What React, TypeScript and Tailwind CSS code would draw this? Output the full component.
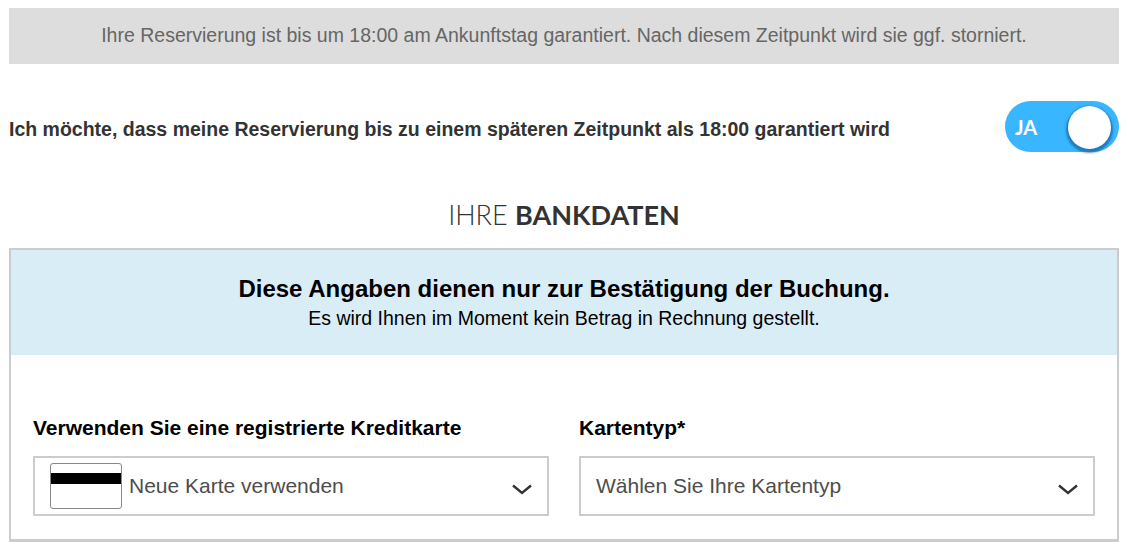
const Chevron = () => (
  <svg width="20" height="11" viewBox="0 0 20 11" fill="none" className="mt-[6px] shrink-0">
    <path d="M1 1.5 L10 9 L19 1.5" stroke="#333" strokeWidth="2.4" />
  </svg>
);

const CardIcon = () => (
  <div className="relative h-[46px] w-[72px] shrink-0 rounded-[3px] border border-[#888] bg-white">
    <div className="absolute inset-x-0 top-[9px] h-[11px] bg-black" />
  </div>
);

const App = () => (
  <div className="w-[1128px] h-[551px] overflow-hidden bg-white pt-2 px-[9px] font-['Liberation_Sans',sans-serif]">
    <div className="flex h-14 items-center justify-center bg-[#dddddd] pb-[1px] text-[19.5px] text-[#666666]">
      Ihre Reservierung ist bis um 18:00 am Ankunftstag garantiert. Nach diesem Zeitpunkt wird sie ggf. storniert.
    </div>

    <div className="mt-[37px] flex h-[51px] items-center justify-between">
      <span className="pt-[6px] text-[19.5px] font-bold text-[#333333]">
        Ich möchte, dass meine Reservierung bis zu einem späteren Zeitpunkt als 18:00 garantiert wird
      </span>
      <div className="relative flex h-[51px] w-[114px] items-center rounded-full bg-[#38b6ff] pl-[10px]">
        <span className="font-['Lato',sans-serif] text-[20px] font-bold text-white">JA</span>
        <div className="absolute right-[8px] top-[5px] h-[43px] w-[43px] rounded-full bg-white shadow-[0_2px_2px_2px_rgba(20,90,150,0.65)]" />
      </div>
    </div>

    <h2 className="mt-[47px] text-center font-['Lato',sans-serif] text-[27px] leading-[32px] text-[#333333]">
      <span className="font-light">IHRE </span>
      <span className="font-bold">BANKDATEN</span>
    </h2>

    <div className="mt-[17px] h-[294px] border-2 border-b-[3px] border-[#cccccc]">
      <div className="flex h-[105px] flex-col items-center bg-[#d9edf7] pt-[25px] text-black">
        <p className="text-[24px] font-bold leading-[28px]">Diese Angaben dienen nur zur Bestätigung der Buchung.</p>
        <p className="mt-[2px] text-[19.5px] leading-[27px]">Es wird Ihnen im Moment kein Betrag in Rechnung gestellt.</p>
      </div>

      <div className="mt-[59px] flex gap-[30px] px-[22px]">
        <div className="w-[516px]">
          <label className="block text-[21px] font-bold leading-[28px] text-black">
            Verwenden Sie eine registrierte Kreditkarte
          </label>
          <div className="mt-[14px] flex h-[60px] items-center border-2 border-[#cccccc] pl-[15px] pr-[15px]">
            <CardIcon />
            <span className="ml-[7px] flex-1 text-[21px] text-[#4d4d4d]">Neue Karte verwenden</span>
            <Chevron />
          </div>
        </div>
        <div className="w-[516px]">
          <label className="block text-[21px] font-bold leading-[28px] text-black">Kartentyp*</label>
          <div className="mt-[14px] flex h-[60px] items-center border-2 border-[#cccccc] pl-[15px] pr-[15px]">
            <span className="flex-1 text-[21px] text-[#4d4d4d]">Wählen Sie Ihre Kartentyp</span>
            <Chevron />
          </div>
        </div>
      </div>
    </div>
  </div>
);

export default App;
